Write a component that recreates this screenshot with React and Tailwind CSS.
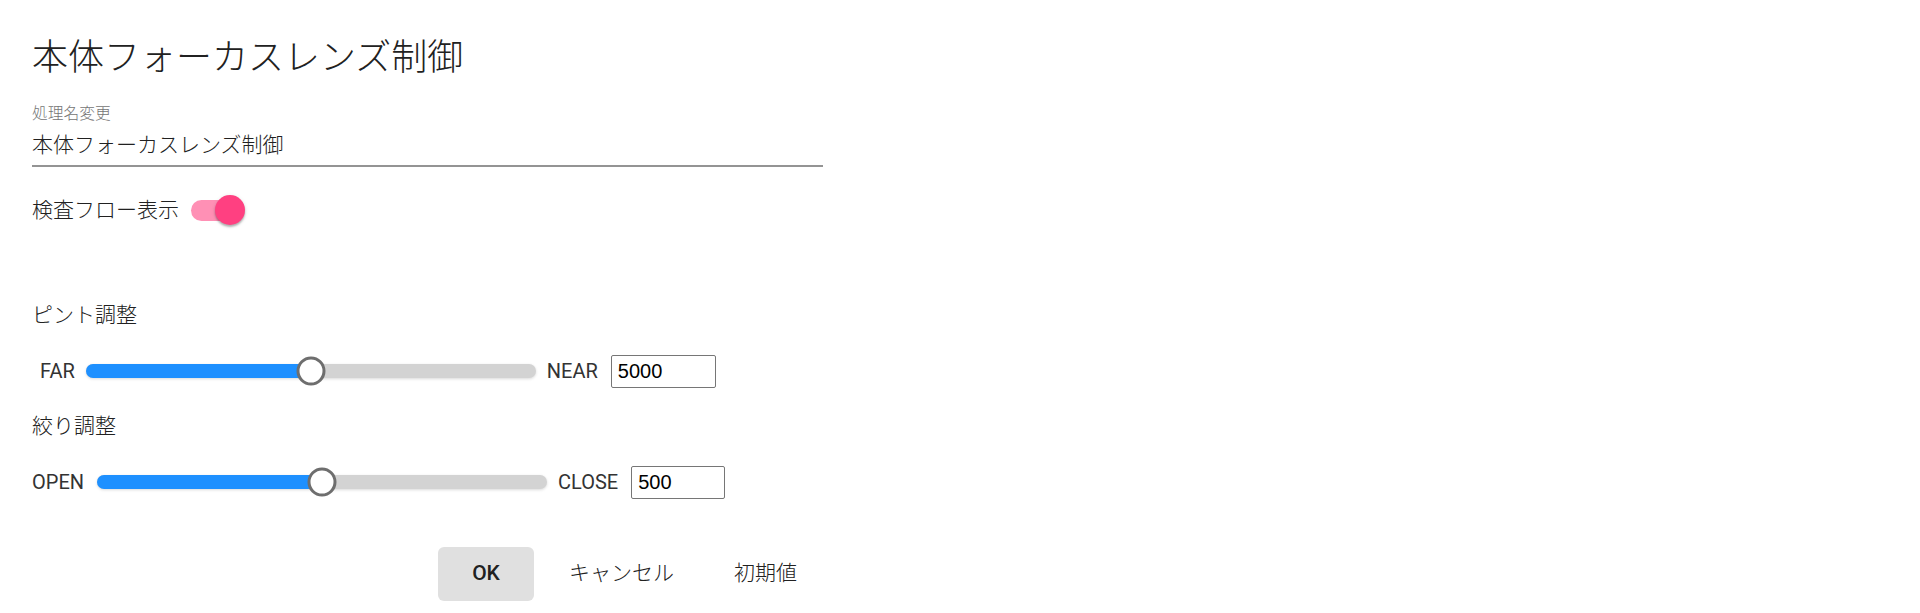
import React from "react";

const font = { fontFamily: "Roboto, 'Noto Sans CJK JP', sans-serif" };

function Slider({ left, right, value, inputWidth, leftGap, labelOffset }) {
  return (
    <div className="flex items-center h-[34px]">
      <span className={`text-[20px] leading-[24px] text-[#333] ${labelOffset}`}>
        {left}
      </span>

      {/* track */}
      <div
        className={`relative h-[14px] w-[450px] rounded-full bg-[#d3d3d3] shadow-[0_1px_3px_rgba(0,0,0,0.15)] ${leftGap}`}
      >
        <div className="absolute left-0 top-0 h-full w-1/2 rounded-l-full bg-[#1e90ff]" />
        <div className="absolute left-1/2 top-1/2 h-[29px] w-[29px] -translate-x-1/2 -translate-y-1/2 rounded-full border-[3px] border-[#6e6e6e] bg-white" />
      </div>

      <span className="ml-[11px] text-[20px] leading-[24px] text-[#333]">
        {right}
      </span>
      <input
        readOnly
        value={value}
        className={`ml-[13px] h-[33px] rounded-[2px] border border-[#767676] px-[6px] text-[20px] text-black outline-none ${inputWidth}`}
        style={{ fontFamily: "'Liberation Sans', Arial, sans-serif" }}
      />
    </div>
  );
}

export default function App() {
  return (
    <div className="min-h-[613px] w-full bg-white pl-[32px] pt-[34px] text-[#212121]" style={font}>
      {/* Title */}
      <h1 className="h-[48px] text-[36px] font-light leading-[48px]">
        本体フォーカスレンズ制御
      </h1>

      {/* Name field */}
      <div className="mt-[22px] w-[791px]">
        <div className="h-[20px] text-[15.75px] font-light leading-[20px] text-[#757575]">
          処理名変更
        </div>
        <div className="mt-[6px] h-[30px] text-[21px] font-light leading-[30px]">
          本体フォーカスレンズ制御
        </div>
        <div className="mt-[5px] h-[2px] w-full bg-[#949494]" />
      </div>

      {/* Flow toggle */}
      <div className="mt-[22px] flex h-[42px] items-center">
        <span className="text-[21px] font-light leading-[30px]">検査フロー表示</span>
        <span className="relative ml-[12px] flex h-[30px] w-[54px] items-center">
          <span className="h-[21px] w-[51px] rounded-full bg-[#ff90b5]" />
          <span className="absolute left-[24px] top-0 h-[30px] w-[30px] rounded-full bg-[#ff4081] shadow-[0_2px_2px_rgba(0,0,0,0.25),0_1px_4px_rgba(0,0,0,0.12)]" />
        </span>
      </div>

      {/* Focus */}
      <div className="mt-[69px] h-[30px] text-[21px] font-light leading-[30px]">ピント調整</div>
      <div className="mt-[24px]">
        <Slider
          left="FAR"
          right="NEAR"
          value="5000"
          inputWidth="w-[105px]"
          labelOffset="ml-[8px]"
          leftGap="ml-[11px]"
        />
      </div>

      {/* Iris */}
      <div className="mt-[23px] h-[30px] text-[21px] font-light leading-[30px]">絞り調整</div>
      <div className="mt-[24px]">
        <Slider
          left="OPEN"
          right="CLOSE"
          value="500"
          inputWidth="w-[94px]"
          labelOffset="ml-0"
          leftGap="ml-[13px]"
        />
      </div>

      {/* Actions */}
      <div className="mt-[48px] flex items-center pl-[406px]">
        <button className="h-[54px] w-[96px] rounded-[6px] bg-[#e0e0e0] text-[21px] font-medium text-[#212121]">
          OK
        </button>
        <button className="ml-[35px] h-[54px] text-[21px] font-light text-[#212121]">
          キャンセル
        </button>
        <button className="ml-[60px] h-[54px] text-[21px] font-light text-[#212121]">
          初期値
        </button>
      </div>
    </div>
  );
}
